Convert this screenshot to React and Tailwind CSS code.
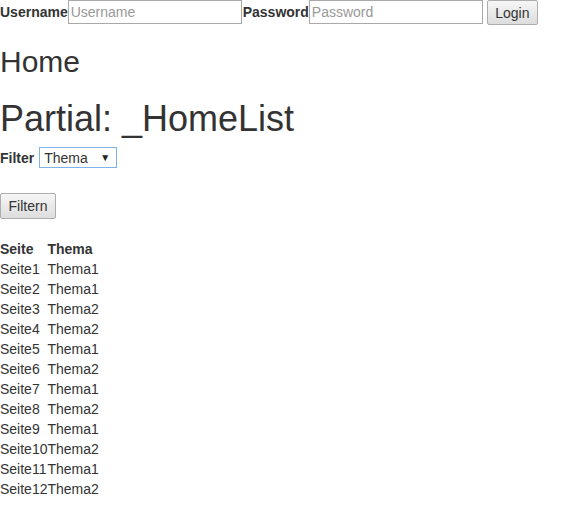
const rows = [
  ["Seite1", "Thema1"],
  ["Seite2", "Thema1"],
  ["Seite3", "Thema2"],
  ["Seite4", "Thema2"],
  ["Seite5", "Thema1"],
  ["Seite6", "Thema2"],
  ["Seite7", "Thema1"],
  ["Seite8", "Thema2"],
  ["Seite9", "Thema1"],
  ["Seite10", "Thema2"],
  ["Seite11", "Thema1"],
  ["Seite12", "Thema2"],
];

const btn =
  "border border-[#adadad] rounded-[2px] bg-gradient-to-b from-[#f6f6f6] to-[#dddddd] text-[14px] text-[#333] px-[6px] leading-[20px]";

export default function App() {
  return (
    <div className="min-h-screen bg-white text-[#333] text-[14px] leading-[20px] font-['Liberation_Sans',Arial,sans-serif]">
      <form className="flex items-center h-[25px]" onSubmit={(e) => e.preventDefault()}>
        <label className="font-bold self-start mt-[2px]">Username</label>
        <input
          className="w-[174px] h-[24px] self-start border border-[#a9a9a9] px-[2px] placeholder:text-[#999] outline-none"
          placeholder="Username"
        />
        <label className="font-bold ml-[1px] self-start mt-[2px]">Password</label>
        <input
          className="w-[174px] h-[24px] self-start border border-[#a9a9a9] px-[2px] placeholder:text-[#999] outline-none"
          placeholder="Password"
        />
        <button className={`${btn} ml-[4px] h-[25px] w-[51px] self-start`}>Login</button>
      </form>

      <h2 className="mt-5 text-[30px] leading-[33px] font-normal">Home</h2>
      <h1 className="mt-[21px] text-[36px] leading-[40px] font-normal">Partial: _HomeList</h1>

      <div className="mt-[8px] flex items-center h-[21px]">
        <label className="font-bold">Filter</label>
        <div className="ml-[5px] w-[78px] h-[21px] border border-[#7eb4ea] flex items-center justify-between pl-[4px] pr-[6px]">
          <span className="text-[#333]">Thema</span>
          <span className="text-[10px] text-[#222]">▼</span>
        </div>
      </div>

      <button className={`${btn} mt-[25px] h-[26px] w-[56px] block`}>Filtern</button>

      <table className="mt-[20px] border-collapse">
        <thead>
          <tr>
            <th className="text-left font-bold p-0 pr-[8px]">Seite</th>
            <th className="text-left font-bold p-0">Thema</th>
          </tr>
        </thead>
        <tbody>
          {rows.map(([s, t]) => (
            <tr key={s}>
              <td className="p-0">{s}</td>
              <td className="p-0">{t}</td>
            </tr>
          ))}
        </tbody>
      </table>
    </div>
  );
}
